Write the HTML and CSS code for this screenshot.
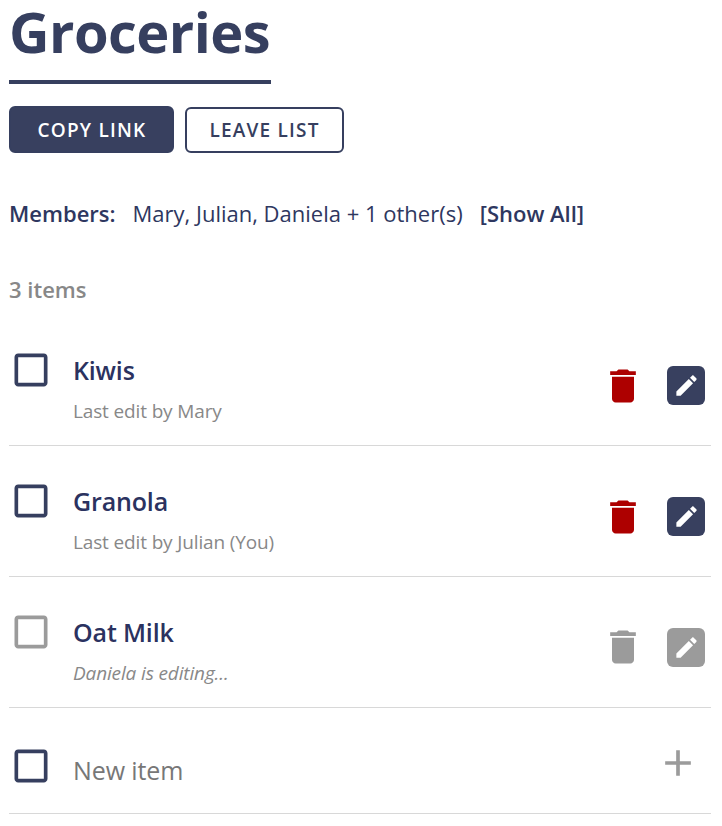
FILE: index.html
```html
<!DOCTYPE html>
<html lang="en">
<head>
<meta charset="utf-8">
<title>Groceries</title>
<link rel="stylesheet" href="styles.css">
</head>
<body>
<svg class="sprite" aria-hidden="true">
  <symbol id="box" viewBox="0 0 24 24"><path d="M19 5v14H5V5h14m0-2H5c-1.1 0-2 .9-2 2v14c0 1.1.9 2 2 2h14c1.1 0 2-.9 2-2V5c0-1.1-.9-2-2-2z"/></symbol>
  <symbol id="trash" viewBox="0 0 24 24"><path d="M6 19c0 1.1.9 2 2 2h8c1.1 0 2-.9 2-2V7H6v12zM19 4h-3.500l-1-1h-5l-1 1H5v2h14V4z"/></symbol>
  <symbol id="pencil" viewBox="0 0 24 24"><path d="M3 17.250V21h3.750L17.810 9.940l-3.750-3.750L3 17.250zM20.710 7.040c.39-.39.39-1.020 0-1.410l-2.340-2.340c-.39-.39-1.020-.39-1.410 0l-1.830 1.830 3.750 3.750 1.830-1.830z"/></symbol>
  <symbol id="plus" viewBox="0 0 24 24"><path d="M19 13h-6v6h-2v-6H5v-2h6V5h2v6h6v2z"/></symbol>
</svg>
<main>
  <h1>Groceries</h1>
  <div class="actions">
    <button class="btn primary">COPY LINK</button>
    <button class="btn outline">LEAVE LIST</button>
  </div>
  <div class="members"><b>Members:</b><span class="names">Mary, Julian, Daniela + 1 other(s)</span><b>[Show All]</b></div>
  <p class="count">3 items</p>
  <ul class="list">
    <li class="item">
      <svg class="check"><use href="#box"/></svg>
      <div class="text"><div class="name">Kiwis</div><div class="note">Last edit by Mary</div></div>
      <svg class="trash"><use href="#trash"/></svg>
      <span class="edit"><svg><use href="#pencil"/></svg></span>
    </li>
    <li class="item">
      <svg class="check"><use href="#box"/></svg>
      <div class="text"><div class="name">Granola</div><div class="note">Last edit by Julian (You)</div></div>
      <svg class="trash"><use href="#trash"/></svg>
      <span class="edit"><svg><use href="#pencil"/></svg></span>
    </li>
    <li class="item locked">
      <svg class="check"><use href="#box"/></svg>
      <div class="text"><div class="name">Oat Milk</div><div class="note">Daniela is editing...</div></div>
      <svg class="trash"><use href="#trash"/></svg>
      <span class="edit"><svg><use href="#pencil"/></svg></span>
    </li>
    <li class="new">
      <svg class="check"><use href="#box"/></svg>
      <span class="placeholder">New item</span>
      <svg class="plus"><use href="#plus"/></svg>
    </li>
  </ul>
</main>
</body>
</html>
```
FILE: styles.css
```css
* { box-sizing: border-box; }
body { margin: 0; background: #fff; color: #363f5f; font-family: "Open Sans", sans-serif; }
.sprite { position: absolute; width: 0; height: 0; }
svg { display: block; fill: currentColor; flex: none; }
main { padding: 0 11px 0 9px; }
h1 { width: 262px; height: 84px; margin: 0; border-bottom: 4px solid #363f5f; font-size: 56px; line-height: 62px; font-weight: 700; letter-spacing: -0.55px; white-space: nowrap; }
.actions { display: flex; gap: 11px; margin-top: 22px; }
.btn { height: 47px; padding: 0; border: 2px solid #363f5f; border-radius: 6px; font: 600 19px/43px "Open Sans", sans-serif; letter-spacing: 1.2px; white-space: nowrap; }
.primary { width: 165px; padding: 1px 0 0 1px; background: #38405f; color: #fff; }
.outline { width: 159px; height: 46px; margin-top: 1px; background: #fff; color: #363f5f; line-height: 42px; }
.members { display: flex; height: 30px; margin-top: 45px; color: #2e3760; font-size: 22px; line-height: 30px; white-space: nowrap; }
.members b { font-weight: 600; }
.names { margin: 0 17px; }
.count { height: 30px; margin: 46px 0 0; color: #888; font-size: 22px; line-height: 30px; font-weight: 600; }
.list { margin: 11px 0 0; padding: 0; list-style: none; }
.item { display: flex; height: 131px; border-bottom: 1px solid #d8d8d8; }
.check { width: 44px; height: 44px; margin: 33px 0 0; }
.text { flex: 1; padding: 38px 0 0 20px; }
.name { color: #2b3260; font-size: 25px; line-height: 34px; font-weight: 600; letter-spacing: -0.15px; }
.note { margin-top: 11px; color: #888; font-size: 19px; line-height: 26px; letter-spacing: -0.14px; }
.trash { width: 44px; height: 44px; margin: 49px 22px 0 0; color: #ad0000; }
.edit { width: 38px; height: 39px; margin: 51px 6px 0 0; padding: 6px; border-radius: 6px; background: #38405f; color: #fff; }
.edit svg { width: 27px; height: 27px; }
.locked .check, .locked .trash { color: #9b9b9b; }
.locked .trash { margin-top: 48px; }
.locked .edit { background: #9b9b9b; }
.locked .note { font-style: italic; }
.new { display: flex; height: 106px; border-bottom: 1px solid #d8d8d8; }
.new .check { margin-top: 36px; }
.placeholder { flex: 1; padding: 45px 0 0 20px; color: #777; font-size: 25px; line-height: 34px; letter-spacing: -0.1px; }
.plus { width: 44px; height: 44px; margin: 33px 11px 0 0; color: #9b9b9b; }
```
